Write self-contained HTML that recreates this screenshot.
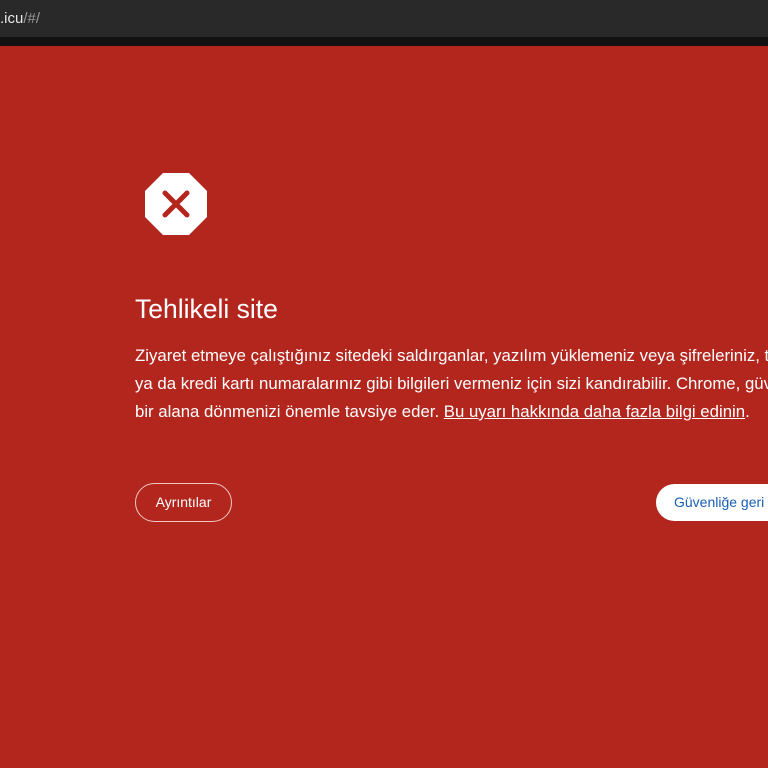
<!DOCTYPE html>
<html style="overflow:hidden"><head><meta charset="utf-8"><style>
body{margin:0;width:768px;height:768px;overflow:hidden;background:#b3261e;font-family:"Liberation Sans","DejaVu Sans",sans-serif;position:relative}
.top{position:absolute;left:0;top:0;width:768px;height:37px;background:#292929}
.url{position:absolute;left:0;top:10px;font-size:15px;color:#e8e8e8}
.url span{color:#9a9a9a}
.strip{position:absolute;left:0;top:37px;width:768px;height:9px;background:#111}
h1{position:absolute;left:135px;top:294px;margin:0;font-weight:normal;font-size:26.5px;color:#fff}
p{position:absolute;left:135px;top:342px;margin:0;width:633px;overflow:hidden;font-size:16.8px;line-height:28px;color:#fff;white-space:nowrap}
p a{color:#fff;text-decoration:underline}
.b1{position:absolute;left:135px;top:483px;width:95px;height:37px;border:1px solid #f2c8c3;border-radius:20px;color:#fff;font-size:14px;line-height:37px;text-align:center}
.b2{position:absolute;left:656px;top:484px;width:112px;overflow:hidden;white-space:nowrap;height:37px;background:#fff;border-radius:20px 0 0 20px;color:#1a5fb4;font-size:14px;line-height:37px;padding-left:18px;box-sizing:border-box}
</style></head><body>
<div class="top"><div class="url">.icu<span>/#/</span></div></div>
<div class="strip"></div>
<svg style="position:absolute;left:145px;top:173px" width="62" height="62" viewBox="0 0 62 62">
<polygon points="18,0 44,0 62,18 62,44 44,62 18,62 0,44 0,18" fill="#fff"/>
<path d="M20 20 L42 42 M42 20 L20 42" stroke="#b3261e" stroke-width="5" stroke-linecap="round"/>
</svg>
<h1>Tehlikeli site</h1>
<p>Ziyaret etmeye çalıştığınız sitedeki saldırganlar, yazılım yüklemeniz veya şifreleriniz, telefon<br>ya da kredi kartı numaralarınız gibi bilgileri vermeniz için sizi kandırabilir. Chrome, güvenli<br>bir alana dönmenizi önemle tavsiye eder. <a>Bu uyarı hakkında daha fazla bilgi edinin</a>.</p>
<div class="b1">Ayrıntılar</div>
<div class="b2">Güvenliğe geri dön</div>
</body></html>
